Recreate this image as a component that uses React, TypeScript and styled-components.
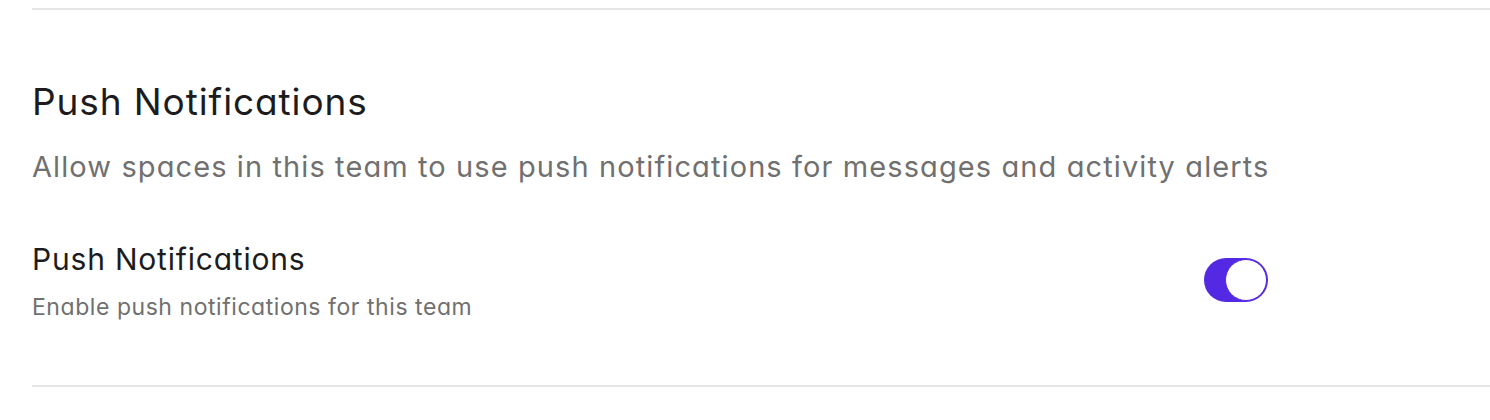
import React, { useState } from "react";
import styled, { createGlobalStyle } from "styled-components";

const Global = createGlobalStyle`
  html, body { margin: 0; padding: 0; background: #ffffff; }
  body { font-family: Inter, "Noto Sans", sans-serif; font-feature-settings: "cv11" 1; }
`;

const Page = styled.div`
  padding: 8px 0 0 32px;
`;

const Section = styled.section`
  border-top: 2px solid #e6e6e6;
  border-bottom: 2px solid #e6e6e6;
  padding: 70px 0 64px;
`;

const Content = styled.div`
  width: 1236px;
  display: flex;
  flex-direction: column;
`;

const Title = styled.h2`
  margin: 0;
  font-size: 37px;
  line-height: 44px;
  font-weight: 400;
  color: #1c1c1e;
  letter-spacing: 0.9px;
`;

const Description = styled.p`
  margin: 25px 0 0;
  font-size: 29px;
  line-height: 36px;
  font-weight: 400;
  color: #707070;
  letter-spacing: 1.1px;
  white-space: nowrap;
`;

const Row = styled.div`
  margin-top: 56px;
  display: flex;
  align-items: center;
  justify-content: space-between;
`;

const Texts = styled.div`
  display: flex;
  flex-direction: column;
  gap: 16px;
`;

const Label = styled.div`
  font-size: 30px;
  line-height: 36px;
  color: #1c1c1e;
  letter-spacing: 0.8px;
`;

const Sub = styled.div`
  font-size: 23px;
  line-height: 28px;
  color: #707070;
  letter-spacing: 0.55px;
`;

const Toggle = styled.button<{ $on: boolean }>`
  width: 64px;
  height: 44px;
  margin-top: -2px;
  border-radius: 22px;
  border: none;
  padding: 1px;
  cursor: pointer;
  background: ${(p) => (p.$on ? "#5429e3" : "#d4d4d8")};
  display: flex;
  align-items: center;
  justify-content: ${(p) => (p.$on ? "flex-end" : "flex-start")};
  box-sizing: border-box;
`;

const Knob = styled.span`
  width: 42px;
  height: 42px;
  box-sizing: border-box;
  border-radius: 50%;
  background: #ffffff;
  border: 1.5px solid #5429e3;
`;

export default function App() {
  const [on, setOn] = useState(true);
  return (
    <Page>
      <Global />
      <Section>
        <Content>
          <Title>Push Notifications</Title>
          <Description>
            Allow spaces in this team to use push notifications for messages and activity alerts
          </Description>
          <Row>
            <Texts>
              <Label>Push Notifications</Label>
              <Sub>Enable push notifications for this team</Sub>
            </Texts>
            <Toggle $on={on} onClick={() => setOn(!on)} aria-label="Push Notifications">
              <Knob />
            </Toggle>
          </Row>
        </Content>
      </Section>
    </Page>
  );
}
